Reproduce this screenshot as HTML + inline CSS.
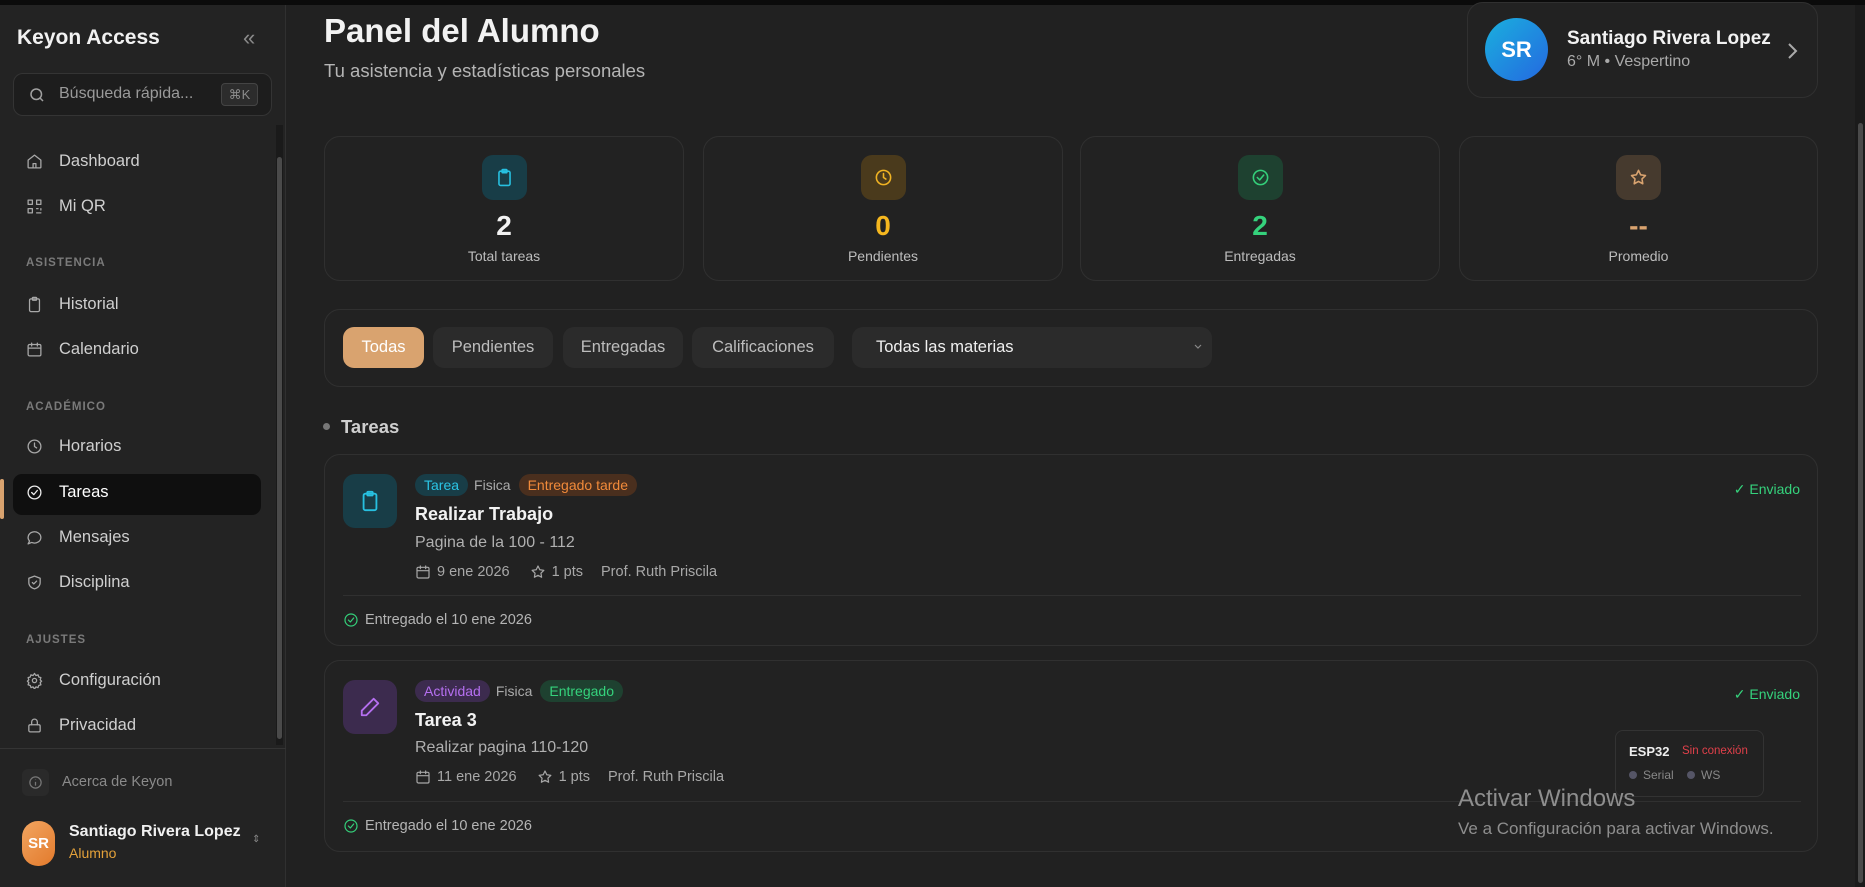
<!DOCTYPE html>
<html><head><meta charset="utf-8"><style>
*{box-sizing:border-box;margin:0;padding:0}
body{width:1865px;height:887px;overflow:hidden;background:#212121;font-family:"Liberation Sans",sans-serif;color:#e6e6e6;position:relative}
.abs{position:absolute}
.topbar{left:0;top:0;width:1865px;height:5px;background:#0b0b0b}
.side{left:0;top:5px;width:286px;height:882px;background:#232323;border-right:1px solid #303030}
.nav{position:absolute;left:26px;display:flex;align-items:center;font-size:16.5px;color:#cfcfcf}
.nav svg{width:17px;height:17px;margin-right:16px;stroke:#a8a8a8;fill:none;stroke-width:1.8;stroke-linecap:round;stroke-linejoin:round}
.sec{position:absolute;left:26px;font-size:11.5px;font-weight:bold;letter-spacing:1px;color:#7a7a7a}
.card{position:absolute;border:1px solid #303030;border-radius:16px;background:#222}
.stat{top:136px;width:360px;height:145px;text-align:center}
.ib{width:45px;height:45px;border-radius:11px;margin:18px auto 0;display:flex;align-items:center;justify-content:center}
.ib svg{width:19px;height:19px;fill:none;stroke-width:2;stroke-linecap:round;stroke-linejoin:round}
.num{font-size:28px;font-weight:bold;margin-top:10px;line-height:32px}
.lbl{font-size:14px;color:#bdbdbd;margin-top:6px}
.btn{position:absolute;top:327px;height:41px;border-radius:11px;background:#2b2b2b;color:#bdbdbd;font-size:16.5px;display:flex;align-items:center;justify-content:center}
.badge{display:inline-block;padding:3px 9px;border-radius:11px;font-size:14px;margin-right:6px}
.meta{font-size:14.5px;color:#a8a8a8;display:flex;align-items:center}
.meta svg{width:16px;height:16px;fill:none;stroke:#a8a8a8;stroke-width:1.8;margin-right:6px;stroke-linecap:round;stroke-linejoin:round}
</style></head><body>
<div class="abs topbar"></div>
<div class="abs side">
  <div class="abs" style="left:17px;top:21px;font-size:21px;font-weight:bold;color:#f2f2f2">Keyon Access</div>
  <div class="abs" style="left:243px;top:20px;font-size:22px;color:#8a8a8a">«</div>
  <div class="abs" style="left:13px;top:68px;width:259px;height:43px;border:1px solid #343434;border-radius:10px;background:#1d1d1d">
    <svg class="abs" style="left:14px;top:12px" width="18" height="18" viewBox="0 0 24 24" fill="none" stroke="#a0a0a0" stroke-width="2"><circle cx="11" cy="11" r="7"/><path d="M20 20l-4-4"/></svg>
    <div class="abs" style="left:45px;top:11px;font-size:16px;color:#9a9a9a">Búsqueda rápida...</div>
    <div class="abs" style="left:207px;top:9px;width:37px;height:23px;border:1px solid #444;border-radius:4px;background:#2c2c2c;font-size:13px;color:#8a8a8a;text-align:center;line-height:21px">⌘K</div>
  </div>
  <div class="abs" style="left:276px;top:120px;width:7px;height:620px;background:#1a1a1a"></div>
  <div class="abs" style="left:277px;top:152px;width:5px;height:582px;background:#4a4a4a;border-radius:3px"></div>
  <div class="nav" style="top:147px"><svg viewBox="0 0 24 24"><path d="M3 10l9-7 9 7v10a1 1 0 0 1-1 1H4a1 1 0 0 1-1-1z"/><path d="M10 21v-6h4v6"/></svg>Dashboard</div>
  <div class="nav" style="top:192px"><svg viewBox="0 0 24 24"><rect x="3" y="3" width="6" height="6"/><rect x="15" y="3" width="6" height="6"/><rect x="3" y="15" width="6" height="6"/><path d="M15 15h2M21 15v2M15 21h6"/></svg>Mi QR</div>
  <div class="sec" style="top:252px">ASISTENCIA</div>
  <div class="nav" style="top:290px"><svg viewBox="0 0 24 24"><rect x="5" y="4" width="14" height="18" rx="2"/><rect x="9" y="2" width="6" height="4" rx="1"/></svg>Historial</div>
  <div class="nav" style="top:335px"><svg viewBox="0 0 24 24"><rect x="3" y="5" width="18" height="16" rx="2"/><path d="M3 10h18M8 3v4M16 3v4"/></svg>Calendario</div>
  <div class="sec" style="top:396px">ACADÉMICO</div>
  <div class="nav" style="top:432px"><svg viewBox="0 0 24 24"><circle cx="12" cy="12" r="9"/><path d="M12 7v5l3 2"/></svg>Horarios</div>
  <div class="abs" style="left:0;top:474px;width:4px;height:40px;background:#d9a36f;border-radius:2px"></div>
  <div class="abs" style="left:13px;top:469px;width:248px;height:41px;background:#0f0f0f;border-radius:9px"></div>
  <div class="nav" style="top:478px;color:#fff"><svg viewBox="0 0 24 24" style="stroke:#eee"><circle cx="12" cy="12" r="9"/><path d="M8 12l3 3 5-6"/></svg>Tareas</div>
  <div class="nav" style="top:523px"><svg viewBox="0 0 24 24"><path d="M21 12a9 8 0 0 1-13 7l-5 2 2-4a9 8 0 1 1 16-5z"/></svg>Mensajes</div>
  <div class="nav" style="top:568px"><svg viewBox="0 0 24 24"><path d="M12 3l8 3v6c0 5-4 8-8 9-4-1-8-4-8-9V6z"/><path d="M9 12l2 2 4-4"/></svg>Disciplina</div>
  <div class="sec" style="top:629px">AJUSTES</div>
  <div class="nav" style="top:666px"><svg viewBox="0 0 24 24"><circle cx="12" cy="12" r="3"/><path d="M12 2l2 3 3-1 1 3 3 1-1 3 2 2-2 2 1 3-3 1-1 3-3-1-2 3-2-3-3 1-1-3-3-1 1-3-2-2 2-2-1-3 3-1 1-3 3 1z"/></svg>Configuración</div>
  <div class="nav" style="top:711px"><svg viewBox="0 0 24 24"><rect x="4" y="11" width="16" height="10" rx="2"/><path d="M8 11V7a4 4 0 0 1 8 0v4"/></svg>Privacidad</div>
  <div class="abs" style="left:0;top:743px;width:286px;height:1px;background:#343434"></div>
  <div class="abs" style="left:22px;top:764px;width:27px;height:27px;border-radius:6px;background:#2a2a2a"></div>
  <svg class="abs" style="left:28px;top:770px" width="15" height="15" viewBox="0 0 24 24" fill="none" stroke="#777" stroke-width="2"><circle cx="12" cy="12" r="9"/><path d="M12 11v6M12 7v.5"/></svg>
  <div class="abs" style="left:62px;top:769px;font-size:14.5px;color:#8a8a8a">Acerca de Keyon</div>
  <div class="abs" style="left:22px;top:816px;width:33px;height:45px;border-radius:16px;background:linear-gradient(135deg,#f2a560,#e27a2c);color:#fff;font-weight:bold;font-size:15px;display:flex;align-items:center;justify-content:center">SR</div>
  <div class="abs" style="left:69px;top:818px;font-size:16px;font-weight:bold;color:#f0f0f0">Santiago Rivera Lopez</div>
  <div class="abs" style="left:69px;top:840px;font-size:14px;color:#e3a13a">Alumno</div>
  <div class="abs" style="left:252px;top:829px;font-size:10px;color:#888">⇕</div>
</div>

<div class="abs" style="left:324px;top:12px;font-size:33px;font-weight:bold;color:#f2f2f2">Panel del Alumno</div>
<div class="abs" style="left:324px;top:60px;font-size:18.5px;color:#b5b5b5">Tu asistencia y estadísticas personales</div>

<div class="card" style="left:1467px;top:2px;width:351px;height:96px">
  <div class="abs" style="left:17px;top:15px;width:63px;height:63px;border-radius:50%;background:linear-gradient(135deg,#1ab0de,#2468e0);color:#fff;font-weight:bold;font-size:22px;display:flex;align-items:center;justify-content:center">SR</div>
  <div class="abs" style="left:99px;top:25px;font-size:19px;font-weight:bold;color:#f2f2f2">Santiago Rivera Lopez</div>
  <div class="abs" style="left:99px;top:50px;font-size:16px;color:#aaa">6° M • Vespertino</div>
  <svg class="abs" style="left:318px;top:39px" width="12" height="18" viewBox="0 0 12 18" fill="none" stroke="#aaa" stroke-width="2"><path d="M3 2l7 7-7 7"/></svg>
</div>

<div class="card stat" style="left:324px"><div class="ib" style="background:#183d47"><svg viewBox="0 0 24 24" stroke="#27c0e0"><rect x="5" y="4" width="14" height="18" rx="2"/><rect x="9" y="2" width="6" height="4" rx="1"/></svg></div><div class="num" style="color:#f2f2f2">2</div><div class="lbl">Total tareas</div></div>
<div class="card stat" style="left:703px"><div class="ib" style="background:#4a3a1c"><svg viewBox="0 0 24 24" stroke="#f0b323"><circle cx="12" cy="12" r="9"/><path d="M12 7v5l3 2"/></svg></div><div class="num" style="color:#f5b71f">0</div><div class="lbl">Pendientes</div></div>
<div class="card stat" style="left:1080px"><div class="ib" style="background:#1e4130"><svg viewBox="0 0 24 24" stroke="#34d07a"><circle cx="12" cy="12" r="9"/><path d="M8 12l3 3 5-6"/></svg></div><div class="num" style="color:#35d27c">2</div><div class="lbl">Entregadas</div></div>
<div class="card stat" style="left:1459px;width:359px"><div class="ib" style="background:#463a2e"><svg viewBox="0 0 24 24" stroke="#d9a36f"><path d="M12 3l2.7 5.6 6.1.9-4.4 4.3 1 6.1L12 17l-5.4 2.9 1-6.1-4.4-4.3 6.1-.9z"/></svg></div><div class="num" style="color:#d9a36f">--</div><div class="lbl">Promedio</div></div>

<div class="card" style="left:324px;top:309px;width:1494px;height:78px"></div>
<div class="btn" style="left:343px;width:81px;background:#d9a36f;color:#fff">Todas</div>
<div class="btn" style="left:433px;width:120px">Pendientes</div>
<div class="btn" style="left:563px;width:120px">Entregadas</div>
<div class="btn" style="left:692px;width:142px">Calificaciones</div>
<div class="btn" style="left:852px;width:360px;justify-content:flex-start;padding-left:24px;color:#f0f0f0">Todas las materias<svg style="position:absolute;right:10px;top:17px" width="8" height="6" viewBox="0 0 8 6" fill="none" stroke="#888" stroke-width="1.2"><path d="M1 1l3 3 3-3"/></svg></div>

<div class="abs" style="left:323px;top:423px;width:7px;height:7px;border-radius:50%;background:#777"></div>
<div class="abs" style="left:341px;top:416px;font-size:18.5px;font-weight:bold;color:#cfcfcf">Tareas</div>

<div class="card" style="left:324px;top:454px;width:1494px;height:192px">
  <div class="abs" style="left:18px;top:19px;width:54px;height:54px;border-radius:12px;background:#183d47;display:flex;align-items:center;justify-content:center"><svg width="22" height="22" viewBox="0 0 24 24" fill="none" stroke="#27c0e0" stroke-width="2"><rect x="5" y="4" width="14" height="18" rx="2"/><rect x="9" y="2" width="6" height="4" rx="1"/></svg></div>
  <div class="abs" style="left:90px;top:19px;font-size:14px"><span class="badge" style="background:#183d47;color:#2bc4e4">Tarea</span><span style="color:#aaa;margin-right:8px">Fisica</span><span class="badge" style="background:#4a2f1e;color:#f18a3a">Entregado tarde</span></div>
  <div class="abs" style="left:90px;top:49px;font-size:18px;font-weight:bold;color:#f2f2f2">Realizar Trabajo</div>
  <div class="abs" style="left:90px;top:79px;font-size:16px;color:#b0b0b0">Pagina de la 100 - 112</div>
  <div class="abs meta" style="left:90px;top:109px"><svg viewBox="0 0 24 24"><rect x="3" y="5" width="18" height="16" rx="2"/><path d="M3 10h18M8 3v4M16 3v4"/></svg>9 ene 2026<span style="width:20px"></span><svg viewBox="0 0 24 24"><path d="M12 3l2.7 5.6 6.1.9-4.4 4.3 1 6.1L12 17l-5.4 2.9 1-6.1-4.4-4.3 6.1-.9z"/></svg>1 pts<span style="width:18px"></span>Prof. Ruth Priscila</div>
  <div class="abs" style="left:18px;top:140px;width:1458px;height:1px;background:#303030"></div>
  <div class="abs meta" style="left:18px;top:157px;color:#b5b5b5"><svg viewBox="0 0 24 24" style="stroke:#34d07a"><circle cx="12" cy="12" r="9"/><path d="M8 12l3 3 5-6"/></svg>Entregado el 10 ene 2026</div>
  <div class="abs" style="right:17px;top:26px;font-size:14px;color:#35d27c">✓ Enviado</div>
</div>
<div class="card" style="left:324px;top:660px;width:1494px;height:192px">
  <div class="abs" style="left:18px;top:19px;width:54px;height:54px;border-radius:12px;background:#3c2b4e;display:flex;align-items:center;justify-content:center"><svg width="22" height="22" viewBox="0 0 24 24" fill="none" stroke="#b56ff0" stroke-width="2" stroke-linejoin="round"><path d="M16 3l5 5L8 21H3v-5z"/></svg></div>
  <div class="abs" style="left:90px;top:19px;font-size:14px"><span class="badge" style="background:#3c2b4e;color:#b56ff0">Actividad</span><span style="color:#aaa;margin-right:8px">Fisica</span><span class="badge" style="background:#1e4130;color:#35d27c">Entregado</span></div>
  <div class="abs" style="left:90px;top:49px;font-size:18px;font-weight:bold;color:#f2f2f2">Tarea 3</div>
  <div class="abs" style="left:90px;top:78px;font-size:16px;color:#b0b0b0">Realizar pagina 110-120</div>
  <div class="abs meta" style="left:90px;top:108px"><svg viewBox="0 0 24 24"><rect x="3" y="5" width="18" height="16" rx="2"/><path d="M3 10h18M8 3v4M16 3v4"/></svg>11 ene 2026<span style="width:20px"></span><svg viewBox="0 0 24 24"><path d="M12 3l2.7 5.6 6.1.9-4.4 4.3 1 6.1L12 17l-5.4 2.9 1-6.1-4.4-4.3 6.1-.9z"/></svg>1 pts<span style="width:18px"></span>Prof. Ruth Priscila</div>
  <div class="abs" style="left:18px;top:140px;width:1458px;height:1px;background:#303030"></div>
  <div class="abs meta" style="left:18px;top:157px;color:#b5b5b5"><svg viewBox="0 0 24 24" style="stroke:#34d07a"><circle cx="12" cy="12" r="9"/><path d="M8 12l3 3 5-6"/></svg>Entregado el 10 ene 2026</div>
  <div class="abs" style="right:17px;top:25px;font-size:14px;color:#35d27c">✓ Enviado</div>
</div>

<div class="abs" style="left:1615px;top:730px;width:149px;height:67px;border:1px solid #333;border-radius:8px;background:#222">
  <div class="abs" style="left:13px;top:13px;font-size:13px;font-weight:bold;color:#eee">ESP32</div>
  <div class="abs" style="left:66px;top:14px;font-size:11.5px;color:#e0404a">Sin conexión</div>
  <div class="abs" style="left:13px;top:37px;font-size:12px;color:#888"><span style="display:inline-block;width:8px;height:8px;border-radius:50%;background:#556;margin-right:6px"></span>Serial <span style="display:inline-block;width:8px;height:8px;border-radius:50%;background:#556;margin:0 6px 0 10px"></span>WS</div>
</div>
<div class="abs" style="left:1458px;top:785px;font-size:24px;color:#8e8e8e">Activar Windows</div>
<div class="abs" style="left:1458px;top:819px;font-size:17px;color:#8e8e8e">Ve a Configuración para activar Windows.</div>

<div class="abs" style="left:1855px;top:5px;width:10px;height:882px;background:#1b1b1b"></div>
<div class="abs" style="left:1858px;top:123px;width:5px;height:760px;background:#4a4a4a;border-radius:3px"></div>
</body></html>
